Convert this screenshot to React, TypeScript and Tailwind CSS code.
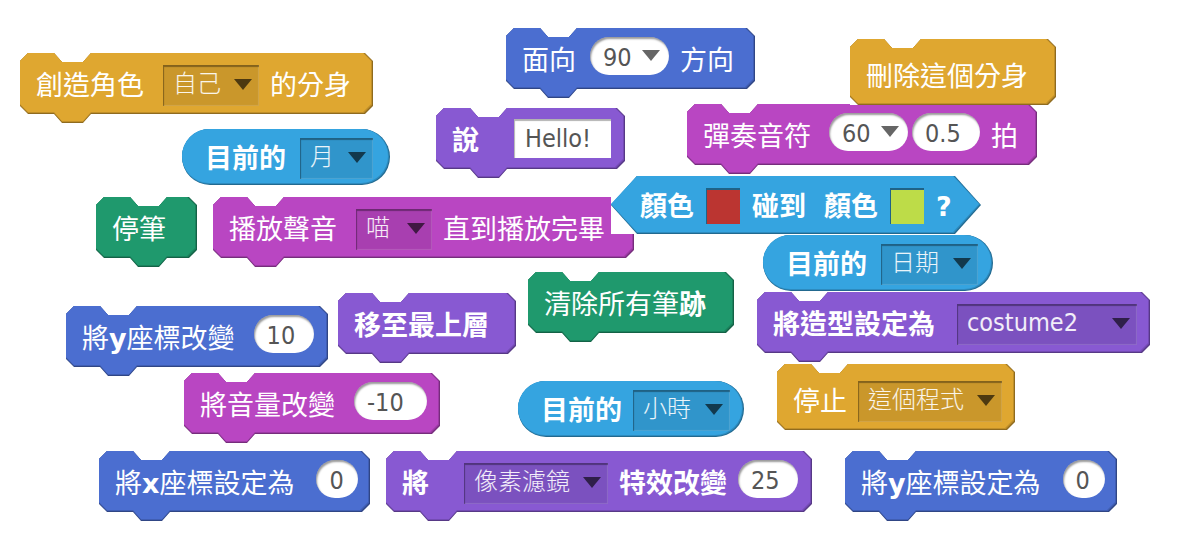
import type { ReactNode } from "react";

type Tone = "gold" | "blue" | "violet" | "pink" | "green" | "sky";

const fill: Record<Tone, string> = {
  gold: "bg-[#dfa730]",
  blue: "bg-[#4b6ed0]",
  violet: "bg-[#8859d2]",
  pink: "bg-[#b946c2]",
  green: "bg-[#1f996d]",
  sky: "bg-[#35a4e0]",
};

const edge: Record<Tone, string> = {
  gold: "bg-[#8f6b1f]",
  blue: "bg-[#304685]",
  violet: "bg-[#573986]",
  pink: "bg-[#762d7c]",
  green: "bg-[#146246]",
  sky: "bg-[#22698f]",
};

const blend: Record<Tone, string> = {
  gold: "bg-[#c08f29]",
  blue: "bg-[#405eb3]",
  violet: "bg-[#744bb4]",
  pink: "bg-[#9d3ba5]",
  green: "bg-[#1a825d]",
  sky: "bg-[#2d8bbf]",
};

const shapes = {
  stack:
    "[clip-path:polygon(0_8px,8px_0,34px_0,42px_9px,63px_9px,71px_0,calc(100%_-_8px)_0,100%_8px,100%_calc(100%_-_17px),calc(100%_-_8px)_calc(100%_-_9px),71px_calc(100%_-_9px),63px_100%,42px_100%,34px_calc(100%_-_9px),8px_calc(100%_-_9px),0_calc(100%_-_17px))]",
  cap: "[clip-path:polygon(0_8px,8px_0,34px_0,42px_9px,63px_9px,71px_0,calc(100%_-_8px)_0,100%_8px,100%_calc(100%_-_8px),calc(100%_-_8px)_100%,8px_100%,0_calc(100%_-_8px))]",
  reporter: "rounded-[28px]",
  boolean:
    "[clip-path:polygon(0_50%,26px_0,calc(100%_-_26px)_0,100%_50%,calc(100%_-_26px)_100%,26px_100%)]",
};

const rows = {
  stack: "h-[70px] pl-[16px] pb-[6px]",
  cap: "h-[66px] pl-[16px] pt-[8px]",
  reporter: "h-[56px] pl-[23px] pt-[2px]",
  boolean: "h-[58px] pl-[29px] pt-[2px]",
};

function Block({
  tone,
  shape = "stack",
  place,
  children,
}: {
  tone: Tone;
  shape?: keyof typeof shapes;
  place: string;
  children: ReactNode;
}) {
  const backing = shape === "boolean" || shape === "cap" ? "bg-white" : "";
  return (
    <div className={`absolute ${backing} ${place}`}>
      <div className={`absolute inset-0 ${shapes[shape]} ${edge[tone]}`} />
      <div className={`absolute top-0 right-px bottom-px left-0 ${shapes[shape]} ${blend[tone]}`} />
      <div className={`absolute top-0 right-[2px] bottom-[2px] left-0 ${shapes[shape]} ${fill[tone]}`} />
      <div className={`relative flex items-center ${rows[shape]}`}>{children}</div>
    </div>
  );
}

function Label({
  bold = false,
  space = "",
  children,
}: {
  bold?: boolean;
  space?: string;
  children: ReactNode;
}) {
  return (
    <span
      className={`shrink-0 pt-[2px] text-[27px] leading-[28px] whitespace-nowrap text-white ${bold ? "font-bold" : "font-normal"} ${space}`}
    >
      {children}
    </span>
  );
}

function Latin({ children }: { children: ReactNode }) {
  return <b className="font-['DejaVu_Sans',sans-serif] text-[27px]">{children}</b>;
}

function Arrow({ className }: { className: string }) {
  return (
    <svg
      viewBox="0 0 18 11"
      aria-hidden="true"
      className={`pointer-events-none absolute h-[11px] w-[18px] ${className}`}
    >
      <path d="M0 0H18L9 11Z" fill="currentColor" />
    </svg>
  );
}

function Menu({
  value,
  name,
  size,
  text = "text-[24px] font-light pb-[2px]",
}: {
  value: string;
  name: string;
  size: string;
  text?: string;
}) {
  return (
    <span className={`relative h-[41px] shrink-0 ${size}`}>
      <select
        aria-label={name}
        className={`h-full w-full appearance-none bg-black/9 pl-[10px] text-white/90 shadow-[inset_1px_2px_1px_rgba(0,0,0,0.35),inset_-1px_-1px_1px_rgba(255,255,255,0.15)] outline-none ${text}`}
      >
        <option>{value}</option>
      </select>
      <Arrow className="top-[14px] right-[7px] text-black/62" />
    </span>
  );
}

const oval =
  "h-[38px] rounded-[19px] bg-white pl-[13px] text-[25px] text-[#555] outline-none shadow-[inset_1px_2px_2px_rgba(0,0,0,0.4)]";

function NumberField({ value, name, size }: { value: string; name: string; size: string }) {
  return (
    <input aria-label={name} defaultValue={value} className={`mb-[8px] shrink-0 pt-[2px] ${oval} ${size}`} />
  );
}

function NumberMenu({ value, name }: { value: string; name: string }) {
  return (
    <span className="relative mb-[8px] h-[38px] w-[79px] shrink-0">
      <select aria-label={name} className={`block w-full appearance-none pt-[2px] ${oval}`}>
        <option>{value}</option>
      </select>
      <Arrow className="top-[13px] right-[9px] text-[#666]" />
    </span>
  );
}

function Swatch({ value, name }: { value: string; name: string }) {
  return (
    <input
      type="color"
      aria-label={name}
      defaultValue={value}
      className="h-[36px] w-[34px] shrink-0 appearance-none border-t-2 border-l border-black/40 bg-transparent p-0 [&::-webkit-color-swatch]:rounded-none [&::-webkit-color-swatch]:border-0 [&::-webkit-color-swatch-wrapper]:p-0"
    />
  );
}

const gap = {
  near: "ml-[11px]",
  mid: "ml-[14px]",
  far: "ml-[19px]",
  wide: "ml-[35px]",
};

export default function App() {
  return (
    <main className="relative min-h-screen overflow-hidden bg-white font-['DejaVu_Sans_Condensed','Noto_Sans_CJK_TC',sans-serif]">
      <Block tone="gold" place="left-[20px] top-[53px] w-[353px]">
        <Label>創造角色</Label>
        <Menu name="角色" value="自己" size={`w-[96px] ${gap.far}`} />
        <Label space={gap.near}>的分身</Label>
      </Block>

      <Block tone="blue" place="left-[506px] top-[28px] w-[249px]">
        <Label>面向</Label>
        <span className={`flex items-center gap-[11px] ${gap.mid}`}>
          <NumberMenu name="方向" value="90" />
          <Label>方向</Label>
        </span>
      </Block>

      <Block tone="violet" place="left-[436px] top-[108px] w-[189px]">
        <Label bold>說</Label>
        <input
          aria-label="說"
          defaultValue="Hello!"
          className={`mb-[4px] h-[39px] w-[97px] shrink-0 bg-white pl-[11px] text-[25px] text-[#555] shadow-[inset_1px_2px_1px_rgba(0,0,0,0.3)] outline-none ${gap.wide}`}
        />
      </Block>

      <Block tone="pink" place="left-[687px] top-[104px] w-[350px]">
        <Label>彈奏音符</Label>
        <span className="ml-[18px] flex items-center gap-[4px]">
          <NumberMenu name="音符" value="60" />
          <NumberField name="拍數" value="0.5" size="w-[68px]" />
        </span>
        <Label space={gap.near}>拍</Label>
      </Block>

      <Block tone="gold" shape="cap" place="left-[850px] top-[39px] w-[206px]">
        <Label>刪除這個分身</Label>
      </Block>

      <Block tone="sky" shape="reporter" place="left-[182px] top-[129px] w-[208px]">
        <Label bold>目前的</Label>
        <Menu name="目前的時間單位" value="月" size={`w-[73px] ${gap.mid}`} />
      </Block>

      <Block tone="green" place="left-[96px] top-[197px] w-[101px]">
        <Label>停筆</Label>
      </Block>

      <Block tone="pink" place="left-[213px] top-[197px] w-[421px]">
        <Label>播放聲音</Label>
        <Menu name="聲音" value="喵" size={`w-[76px] ${gap.far}`} />
        <Label space={gap.near}>直到播放完畢</Label>
      </Block>

      <Block tone="sky" shape="boolean" place="left-[611px] top-[176px] w-[370px]">
        <span className="flex items-center gap-[12px]">
          <Label bold>顏色</Label>
          <Swatch name="第一個顏色" value="#bb3531" />
          <Label bold>碰到</Label>
        </span>
        <span className="ml-[18px] flex items-center gap-[12px]">
          <Label bold>顏色</Label>
          <Swatch name="第二個顏色" value="#bddc48" />
          <Label bold>
            <Latin>?</Latin>
          </Label>
        </span>
      </Block>

      <Block tone="sky" shape="reporter" place="left-[763px] top-[235px] w-[230px]">
        <Label bold>目前的</Label>
        <Menu name="目前的時間單位" value="日期" size={`w-[97px] ${gap.mid}`} />
      </Block>

      <Block tone="blue" place="left-[66px] top-[306px] w-[262px]">
        <Label>
          將<Latin>y</Latin>座標改變
        </Label>
        <NumberField name="y座標改變" value="10" size={`w-[60px] ${gap.far}`} />
      </Block>

      <Block tone="violet" place="left-[338px] top-[293px] w-[178px]">
        <Label bold>移至最上層</Label>
      </Block>

      <Block tone="green" place="left-[528px] top-[272px] w-[206px]">
        <Label>
          清除所有筆<b>跡</b>
        </Label>
      </Block>

      <Block tone="violet" place="left-[757px] top-[292px] w-[393px]">
        <Label bold>將造型設定為</Label>
        <Menu name="造型" value="costume2" size="ml-[22px] w-[180px]" text="text-[25px] pb-[4px]" />
      </Block>

      <Block tone="pink" place="left-[184px] top-[373px] w-[256px]">
        <Label>將音量改變</Label>
        <NumberField name="音量改變" value="-10" size={`w-[73px] ${gap.far}`} />
      </Block>

      <Block tone="sky" shape="reporter" place="left-[518px] top-[381px] w-[226px]">
        <Label bold>目前的</Label>
        <Menu name="目前的時間單位" value="小時" size={`w-[97px] ${gap.near}`} />
      </Block>

      <Block tone="gold" shape="cap" place="left-[777px] top-[364px] w-[238px]">
        <Label>停止</Label>
        <Menu name="停止" value="這個程式" size={`w-[144px] ${gap.near}`} />
      </Block>

      <Block tone="blue" place="left-[99px] top-[451px] w-[271px]">
        <Label>
          將<Latin>x</Latin>座標設定為
        </Label>
        <NumberField name="x座標" value="0" size="ml-[22px] w-[42px]" />
      </Block>

      <Block tone="violet" place="left-[386px] top-[451px] w-[426px]">
        <Label bold>將</Label>
        <Menu name="特效" value="像素濾鏡" size={`w-[144px] ${gap.wide}`} />
        <Label bold space={gap.near}>
          特效改變
        </Label>
        <NumberField name="特效改變" value="25" size={`w-[60px] ${gap.near}`} />
      </Block>

      <Block tone="blue" place="left-[845px] top-[451px] w-[272px]">
        <Label>
          將<Latin>y</Latin>座標設定為
        </Label>
        <NumberField name="y座標" value="0" size="ml-[22px] w-[42px]" />
      </Block>
    </main>
  );
}
